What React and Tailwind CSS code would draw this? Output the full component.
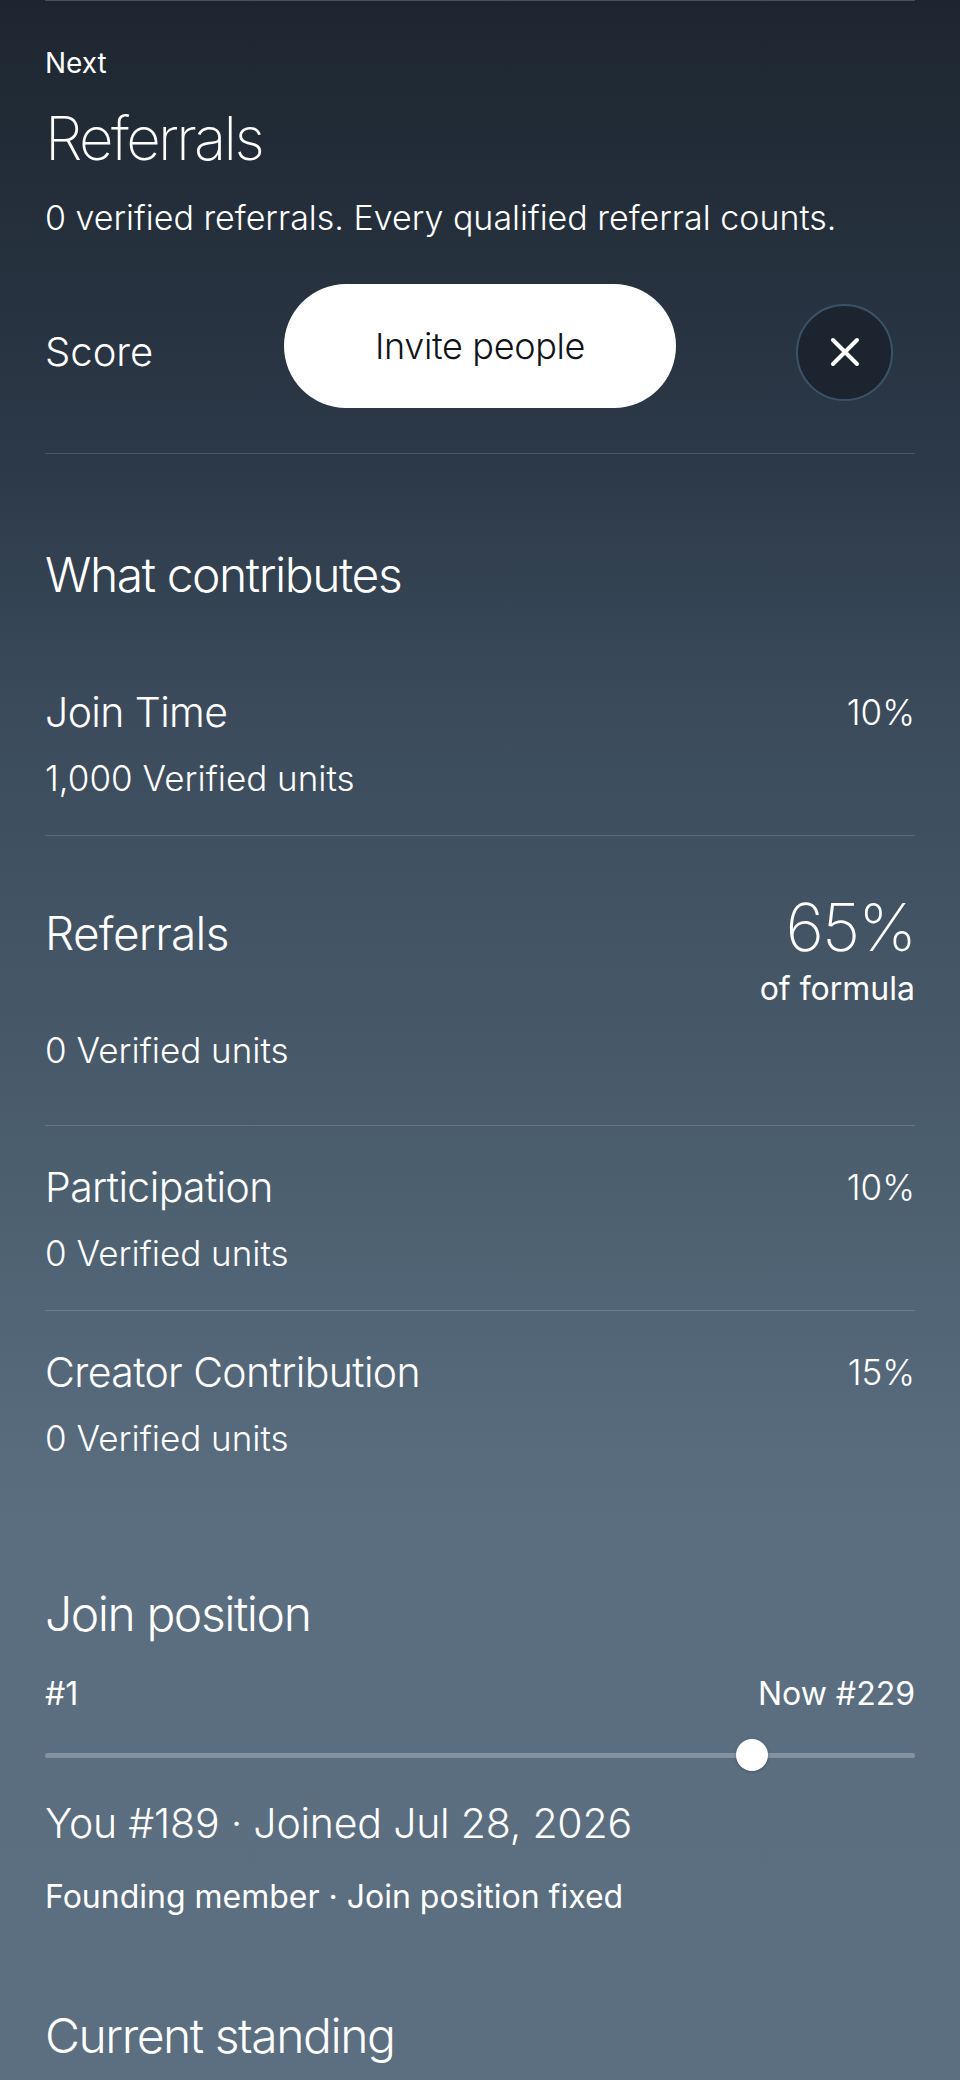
import React from "react";

function Divider() {
  return <div className="h-px bg-white/15" />;
}

function Row({ title, pct, units }) {
  return (
    <div className="pt-[37px] pb-[37px]">
      <div className="flex items-center justify-between">
        <div className="text-[41px] leading-[48px] font-light tracking-[-0.015em]">{title}</div>
        <div className="text-[35px] leading-[48px] font-light">{pct}</div>
      </div>
      <div className="mt-[22px] text-[35px] leading-[40px] font-light">{units}</div>
    </div>
  );
}

export default function App() {
  const you = 189;
  const now = 229;
  const frac = (you - 1) / (now - 1);
  return (
    <div className="min-h-[2080px] w-full bg-[linear-gradient(180deg,#1d2630_0%,#2c3948_22%,#3a4a5a_33%,#4b5e6e_55%,#5a6e80_72%,#5b6f81_100%)] font-[Inter,'Noto_Sans',sans-serif] text-white">
      <div className="px-[45px] pb-[40px]">
        <div className="h-px bg-white/20" />

        <div className="mt-[46px] text-[28px] leading-[32px] font-normal">Next</div>
        <h1 className="mt-[27px] text-[60px] leading-[64px] font-extralight tracking-[-0.045em]">Referrals</h1>
        <p className="mt-[28px] text-[34px] leading-[40px] font-light">
          0 verified referrals. Every qualified referral counts.
        </p>

        <div className="mt-[46px] flex h-[124px] items-center">
          <div className="mt-[12px] w-[239px] shrink-0 text-[40px] leading-[48px] font-light">Score</div>
          <button className="flex h-[124px] w-[392px] shrink-0 items-center justify-center rounded-full bg-white text-[36px] font-light tracking-[-0.01em] text-[#111418]">
            Invite people
          </button>
          <button className="ml-auto mr-[22px] mt-[12px] flex h-[97px] w-[97px] shrink-0 items-center justify-center rounded-full border-[2px] border-[#3b5368] bg-[#1c252f]">
            <svg width="30" height="30" viewBox="0 0 30 30" fill="none">
              <path d="M3 3 L27 27 M27 3 L3 27" stroke="white" strokeWidth="4" strokeLinecap="round" />
            </svg>
          </button>
        </div>

        <div className="mt-[45px]">
          <Divider />
        </div>

        <h2 className="mt-[93px] text-[48px] leading-[56px] font-light tracking-[-0.03em]">What contributes</h2>

        <div className="mt-[48px]">
          <Row title="Join Time" pct="10%" units="1,000 Verified units" />
          <Divider />
          <div className="pt-[58px] pb-[55px]">
            <div className="flex items-start justify-between">
              <div className="mt-[13px] text-[46px] leading-[52px] font-light tracking-[-0.015em]">Referrals</div>
              <div className="flex flex-col items-end">
                <div className="text-[66px] leading-[66px] font-extralight tracking-[-0.03em]">65%</div>
                <div className="mt-[9px] text-[32px] leading-[40px] font-normal">of formula</div>
              </div>
            </div>
            <div className="mt-[21px] text-[35px] leading-[40px] font-light">0 Verified units</div>
          </div>
          <Divider />
          <Row title="Participation" pct="10%" units="0 Verified units" />
          <Divider />
          <Row title="Creator Contribution" pct="15%" units="0 Verified units" />
        </div>

        <h2 className="mt-[91px] text-[48px] leading-[56px] font-light tracking-[-0.03em]">Join position</h2>

        <div className="mt-[34px] flex items-center justify-between text-[32px] leading-[36px] font-normal">
          <span>#1</span>
          <span>Now #{now}</span>
        </div>

        <div className="relative mt-[27px] h-[32px]">
          <div className="absolute left-0 right-0 top-[14px] h-[5px] rounded-full bg-white/25" />
          <div
            className="absolute top-0 h-[32px] w-[32px] rounded-full bg-white shadow-[0_1px_3px_rgba(0,0,0,0.25)]"
            style={{ left: `calc(${frac * 100}% - ${frac * 32}px)` }}
          />
        </div>

        <div className="mt-[28px] text-[41px] leading-[48px] font-light tracking-[-0.005em]">
          You #{you} · Joined Jul 28, 2026
        </div>
        <div className="mt-[30px] text-[32px] leading-[40px] font-normal">
          Founding member · Join position fixed
        </div>

        <h2 className="mt-[91px] text-[48px] leading-[56px] font-light tracking-[-0.03em]">Current standing</h2>
      </div>
    </div>
  );
}
